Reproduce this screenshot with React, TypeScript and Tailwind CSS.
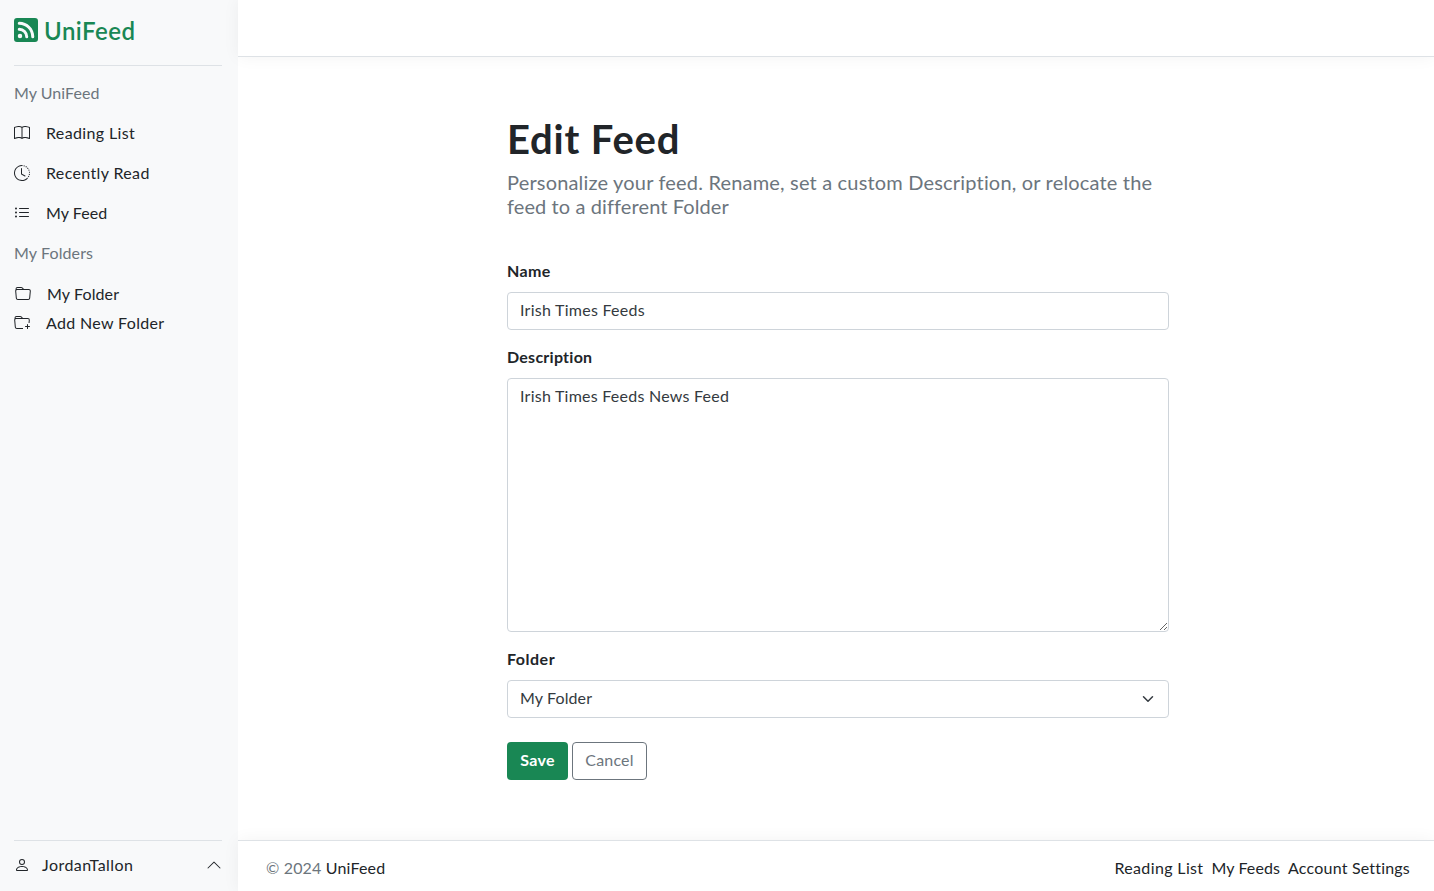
import type { ReactNode } from "react";
import {
  BsBook,
  BsChevronUp,
  BsClockHistory,
  BsFolder,
  BsFolderPlus,
  BsListUl,
  BsPerson,
  BsRssFill,
} from "react-icons/bs";

function SideLink({ icon, children, className = "" }: { icon: ReactNode; children: ReactNode; className?: string }) {
  return (
    <a href="#" className={`flex h-6 items-center gap-4 text-[#212529] ${className}`}>
      <span>{icon}</span>
      <span>{children}</span>
    </a>
  );
}

function Sidebar() {
  return (
    <aside className="flex w-[238px] shrink-0 flex-col bg-[#f8f9fa] px-3.5 pr-4">
      <a href="#" className="flex h-[65px] items-center gap-1.5 pb-[5px] text-[#198754]">
        <BsRssFill size={24} />
        <span className="pt-0.5 text-2xl font-semibold tracking-[0.5px]">UniFeed</span>
      </a>
      <div className="border-t border-[#dee2e6]" />
      <h2 className="mt-[15px] h-6 leading-6 tracking-[0.05px] text-[#6c757d]">My UniFeed</h2>
      <nav className="mt-4 flex flex-col gap-4">
        <SideLink className="tracking-[0.36px]" icon={<BsBook size={16} />}>Reading List</SideLink>
        <SideLink className="tracking-[0.36px]" icon={<BsClockHistory size={16} />}>Recently Read</SideLink>
        <SideLink className="tracking-[0.05px]" icon={<BsListUl size={16} />}>My Feed</SideLink>
      </nav>
      <h2 className="mt-4 h-6 leading-6 tracking-[0.12px] text-[#6c757d]">My Folders</h2>
      <nav className="mt-[17px] flex flex-col gap-[5px]">
        <SideLink className="pl-px tracking-[0.12px]" icon={<BsFolder size={16} />}>My Folder</SideLink>
        <SideLink className="tracking-[0.34px]" icon={<BsFolderPlus size={16} />}>Add New Folder</SideLink>
      </nav>
      <div className="mt-auto flex h-[51px] items-center border-t border-[#dee2e6] pb-0.5 text-[#212529]">
        <BsPerson size={16} />
        <span className="ml-3 tracking-[0.45px]">JordanTallon</span>
        <BsChevronUp size={16} className="ml-auto" />
      </div>
    </aside>
  );
}

function FeedForm() {
  return (
    <form className="w-[662px] text-[#212529]">
      <h1 className="text-[40px] font-bold leading-[48px] tracking-[0.8px]">Edit Feed</h1>
      <p className="mt-[7px] text-xl leading-6 tracking-[0.18px] text-[#6c757d]">
        Personalize your feed. Rename, set a custom Description, or relocate the
        <br />
        <span className="tracking-[0.1px]">feed to a different Folder</span>
      </p>
      <label htmlFor="name" className="mt-[41px] block h-6 font-bold leading-6 tracking-[0.4px]">Name</label>
      <input
        id="name"
        defaultValue="Irish Times Feeds"
        className="mt-[9px] block h-[38px] w-full rounded border border-[#ced4da] bg-white px-3 pb-1 tracking-[0.26px] text-[#343a40]"
      />
      <label htmlFor="description" className="mt-[15px] block h-6 font-bold leading-6 tracking-[0.25px]">Description</label>
      <textarea
        id="description"
        defaultValue="Irish Times Feeds News Feed"
        className="mt-[9px] block h-[254px] w-full rounded border border-[#ced4da] bg-white px-3 py-[5px] leading-6 tracking-[0.24px] text-[#343a40]"
      />
      <label htmlFor="folder" className="mt-[15px] block h-6 font-bold leading-6 tracking-[0.5px]">Folder</label>
      <div className="mt-[9px] grid">
        <select
          id="folder"
          className="col-start-1 row-start-1 h-[38px] w-full appearance-none rounded border border-[#ced4da] bg-white px-3 pb-0.5 tracking-[0.12px] text-[#343a40]"
        >
          <option>My Folder</option>
        </select>
        <svg
          viewBox="0 0 16 16"
          className="pointer-events-none col-start-1 row-start-1 mr-[13px] h-3 w-4 self-center justify-self-end"
          fill="none"
          stroke="#343a40"
          strokeWidth="2"
          strokeLinecap="round"
          strokeLinejoin="round"
        >
          <path d="m2 5 6 6 6-6" />
        </svg>
      </div>
      <div className="mt-6 flex gap-1">
        <button type="button" className="h-[38px] w-[61px] rounded bg-[#198754] pb-0.5 font-bold tracking-[0.3px] text-white">
          Save
        </button>
        <button type="button" className="h-[38px] w-[75px] rounded border border-[#6c757d] pb-0.5 tracking-[0.2px] text-[#6c757d]">
          Cancel
        </button>
      </div>
    </form>
  );
}

export default function App() {
  return (
    <div className="flex h-screen overflow-hidden bg-white font-[Lato,sans-serif] text-base">
      <Sidebar />
      <div className="flex min-w-0 flex-1 flex-col">
        <header className="h-[57px] shrink-0 border-b border-[#dee2e6] bg-white shadow-[0_0_16px_rgba(0,0,0,0.05)]" />
        <main className="flex flex-1 justify-center pl-1 pt-[58px]">
          <FeedForm />
        </main>
        <footer className="flex h-[51px] shrink-0 items-center justify-between border-t border-[#dee2e6] bg-white pl-7 pr-6 pt-1 text-[#212529] shadow-[0_0_16px_rgba(0,0,0,0.05)]">
          <p className="tracking-[0.16px] text-[#6c757d]">
            © 2024 <a href="#" className="text-[#212529]">UniFeed</a>
          </p>
          <nav className="flex gap-2">
            <a href="#" className="tracking-[0.36px]">Reading List</a>
            <a href="#" className="tracking-[0.1px]">My Feeds</a>
            <a href="#" className="tracking-[0.2px]">Account Settings</a>
          </nav>
        </footer>
      </div>
    </div>
  );
}
